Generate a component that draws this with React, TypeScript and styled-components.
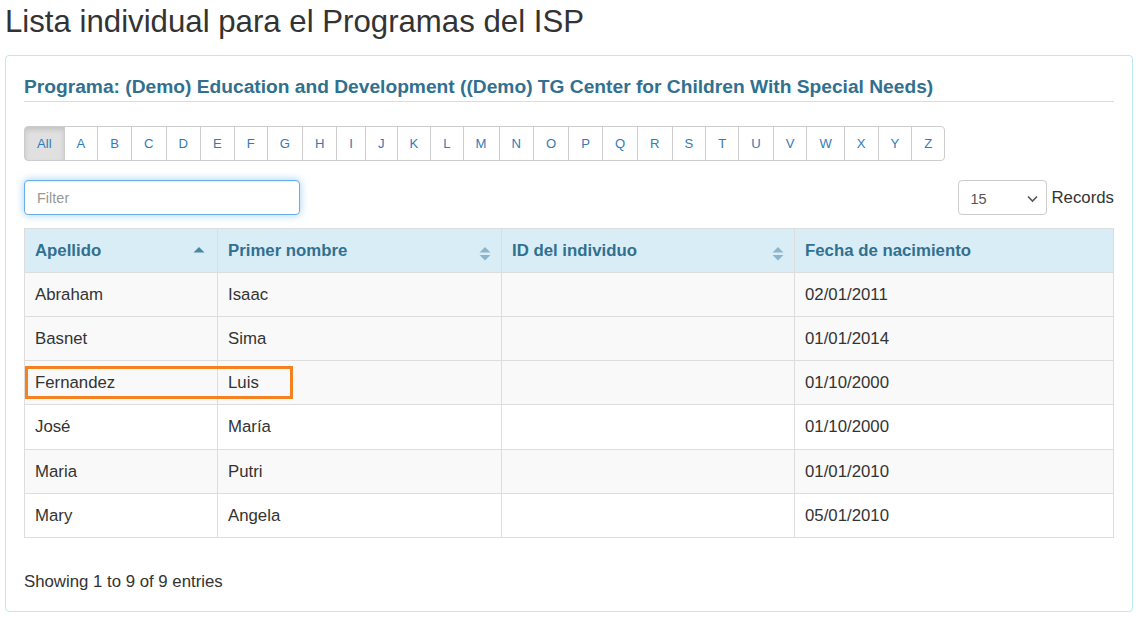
import React from "react";
import styled, { createGlobalStyle } from "styled-components";

const GlobalStyle = createGlobalStyle`
  html, body { margin: 0; padding: 0; background: #fff; }
  body {
    font-family: "Liberation Sans", Arial, Helvetica, sans-serif;
    color: #333;
    font-size: 16.8px;
  }
  * { box-sizing: border-box; }
`;

const Page = styled.div`
  padding: 5px 7px 5px 5px;
`;

const Title = styled.h1`
  margin: 0 0 17px 0;
  font-size: 31.2px;
  line-height: 33px;
  font-weight: 400;
  color: #333;
`;

const Panel = styled.section`
  border: 1px solid #bce8f1;
  border-radius: 4px;
  padding: 20px 18px 19px 18px;
  height: 557px;
`;

const ProgramHeading = styled.h2`
  margin: 0;
  padding-bottom: 3px;
  border-bottom: 1px solid #bce8f1;
  font-size: 19.2px;
  line-height: 22px;
  font-weight: 700;
  color: #31708f;
`;

const LetterGroup = styled.div`
  display: inline-flex;
  margin-top: 24px;
  height: 35px;
`;

const LetterButton = styled.button<{ $active?: boolean }>`
  height: 35px;
  padding: 0 12px;
  margin-left: -1px;
  border: 1px solid #ccc;
  background: ${(p) => (p.$active ? "#e0e0e0" : "#fff")};
  box-shadow: ${(p) => (p.$active ? "inset 0 3px 5px rgba(0,0,0,.125)" : "none")};
  color: #337ab7;
  font-family: "Liberation Sans", Arial, Helvetica, sans-serif;
  font-size: 13.1px;
  cursor: pointer;
  &:first-child {
    margin-left: 0;
    border-radius: 4px 0 0 4px;
  }
  &:last-child {
    border-radius: 0 4px 4px 0;
  }
`;

const ToolRow = styled.div`
  display: flex;
  justify-content: space-between;
  align-items: center;
  margin-top: 19px;
  height: 35px;
`;

const FilterInput = styled.input`
  width: 276px;
  height: 35px;
  padding: 0 12px;
  border: 1px solid #66afe9;
  border-radius: 4px;
  outline: none;
  box-shadow: inset 0 1px 1px rgba(0,0,0,.075), 0 0 8px rgba(102,175,233,.6);
  font-family: "Liberation Sans", Arial, Helvetica, sans-serif;
  font-size: 14.5px;
  color: #555;
  caret-color: #333;
  &::placeholder { color: #999; }
`;

const RecordsBox = styled.div`
  display: flex;
  align-items: center;
  gap: 5px;
  font-size: 16.8px;
  color: #333;
`;

const SelectBox = styled.div`
  width: 89px;
  height: 35px;
  border: 1px solid #ccc;
  border-radius: 4px;
  display: flex;
  align-items: center;
  justify-content: space-between;
  padding: 2px 8px 0 12px;
  font-size: 14.5px;
  color: #555;
`;

const TableWrap = styled.div`
  position: relative;
  margin-top: 13px;
`;

const Table = styled.table`
  width: 100%;
  border-collapse: collapse;
  table-layout: fixed;
`;

const HeadCell = styled.th`
  height: 44px;
  padding: 0 10px;
  background: #d9edf7;
  border: 1px solid #ddd;
  color: #31708f;
  font-weight: 700;
  font-size: 16.8px;
  text-align: left;
`;

const HeadInner = styled.div`
  display: flex;
  align-items: center;
  justify-content: space-between;
`;

const Row = styled.tr<{ $shaded?: boolean }>`
  background: ${(p) => (p.$shaded ? "#f9f9f9" : "#fff")};
`;

const Cell = styled.td<{ $tall?: boolean }>`
  height: ${(p) => (p.$tall ? "45px" : "44px")};
  padding: 0 10px;
  border: 1px solid #ddd;
  font-size: 16.8px;
  color: #333;
`;

const Highlight = styled.div`
  position: absolute;
  left: 1px;
  top: 138px;
  width: 268px;
  height: 33px;
  border: 3px solid #f58220;
  pointer-events: none;
`;

const Footer = styled.div`
  margin-top: 33px;
  font-size: 16.8px;
  line-height: 22px;
  color: #333;
`;

const SortIcon = ({ mode }: { mode: "asc" | "both" }) =>
  mode === "asc" ? (
    <svg width="12" height="14" viewBox="0 0 12 14" style={{ marginRight: 2 }}>
      <path d="M0.5 8.5 L6 3 L11.5 8.5 Z" fill="#4a86a6" />
    </svg>
  ) : (
    <svg width="12" height="16" viewBox="0 0 12 16" style={{ marginTop: 6 }}>
      <path d="M0.5 6.5 L6 1 L11.5 6.5 Z" fill="#8db5ca" />
      <path d="M0.5 9 L6 14.5 L11.5 9 Z" fill="#8db5ca" />
    </svg>
  );

const letters = ["All", ..."ABCDEFGHIJKLMNOPQRSTUVWXYZ".split("")];

const rows = [
  { last: "Abraham", first: "Isaac", id: "", dob: "02/01/2011", shaded: true },
  { last: "Basnet", first: "Sima", id: "", dob: "01/01/2014", shaded: true },
  { last: "Fernandez", first: "Luis", id: "", dob: "01/10/2000", shaded: true },
  { last: "José", first: "María", id: "", dob: "01/10/2000", shaded: false, tall: true },
  { last: "Maria", first: "Putri", id: "", dob: "01/01/2010", shaded: true },
  { last: "Mary", first: "Angela", id: "", dob: "05/01/2010", shaded: false },
];

export default function App() {
  return (
    <Page>
      <GlobalStyle />
      <Title>Lista individual para el Programas del ISP</Title>
      <Panel>
        <ProgramHeading>
          Programa: (Demo) Education and Development ((Demo) TG Center for Children With Special Needs)
        </ProgramHeading>
        <LetterGroup>
          {letters.map((l) => (
            <LetterButton key={l} $active={l === "All"}>
              {l}
            </LetterButton>
          ))}
        </LetterGroup>
        <ToolRow>
          <FilterInput placeholder="Filter" />
          <RecordsBox>
            <SelectBox>
              <span>15</span>
              <svg width="11" height="8" viewBox="0 0 11 8">
                <path d="M1 1.5 L5.5 6 L10 1.5" stroke="#555" strokeWidth="1.6" fill="none" />
              </svg>
            </SelectBox>
            <span>Records</span>
          </RecordsBox>
        </ToolRow>
        <TableWrap>
          <Table>
            <colgroup>
              <col style={{ width: 193 }} />
              <col style={{ width: 284 }} />
              <col style={{ width: 293 }} />
              <col />
            </colgroup>
            <thead>
              <tr>
                <HeadCell>
                  <HeadInner>
                    Apellido <SortIcon mode="asc" />
                  </HeadInner>
                </HeadCell>
                <HeadCell>
                  <HeadInner>
                    Primer nombre <SortIcon mode="both" />
                  </HeadInner>
                </HeadCell>
                <HeadCell>
                  <HeadInner>
                    ID del individuo <SortIcon mode="both" />
                  </HeadInner>
                </HeadCell>
                <HeadCell>Fecha de nacimiento</HeadCell>
              </tr>
            </thead>
            <tbody>
              {rows.map((r) => (
                <Row key={r.last} $shaded={r.shaded}>
                  <Cell $tall={r.tall}>{r.last}</Cell>
                  <Cell $tall={r.tall}>{r.first}</Cell>
                  <Cell $tall={r.tall}>{r.id}</Cell>
                  <Cell $tall={r.tall}>{r.dob}</Cell>
                </Row>
              ))}
            </tbody>
          </Table>
          <Highlight />
        </TableWrap>
        <Footer>Showing 1 to 9 of 9 entries</Footer>
      </Panel>
    </Page>
  );
}
